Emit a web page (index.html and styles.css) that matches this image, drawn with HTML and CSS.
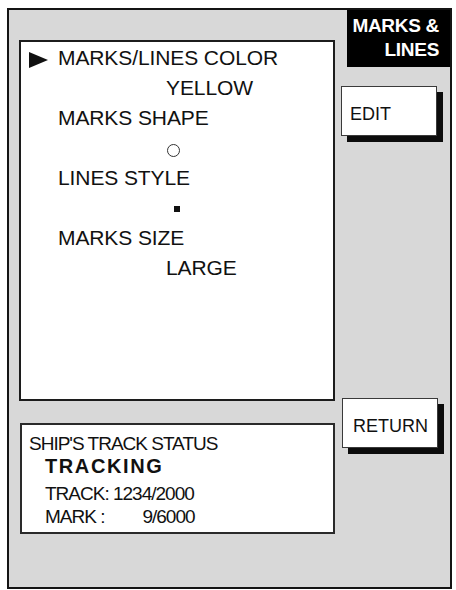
FILE: index.html
```html
<!DOCTYPE html>
<html lang="en">
<head>
  <meta charset="UTF-8">
  <meta name="viewport" content="width=device-width, initial-scale=1.0">
  <title>Marks &amp; Lines</title>
  <link rel="stylesheet" href="styles.css">
</head>
<body>
  <div class="frame">
    <div class="main-col">
      <div class="menu-panel">
        <div class="row label"><span class="cursor"></span>MARKS/LINES COLOR</div>
        <div class="row value">YELLOW</div>
        <div class="row label">MARKS SHAPE</div>
        <div class="row value"><span class="mark-circle"></span></div>
        <div class="row label">LINES STYLE</div>
        <div class="row value"><span class="line-dot"></span></div>
        <div class="row label">MARKS SIZE</div>
        <div class="row value">LARGE</div>
      </div>

      <div class="status-panel">
        <div class="status-line">SHIP'S TRACK STATUS</div>
        <div class="status-line state">TRACKING</div>
        <div class="status-line sub gap">TRACK: 1234/2000</div>
        <div class="status-line sub">MARK :<span class="mark-count">9/6000</span></div>
      </div>
    </div>

    <div class="side-col">
      <div class="title">MARKS &amp;<br>LINES</div>
      <div class="soft-key edit">EDIT</div>
      <div class="soft-key return">RETURN</div>
    </div>
  </div>
</body>
</html>
```

FILE: styles.css
```css
* {
  margin: 0;
  padding: 0;
  box-sizing: border-box;
}

body {
  font-family: 'Liberation Sans', Arial, sans-serif;
  background: #ffffff;
  color: #111111;
}

.frame {
  display: flex;
  width: 445px;
  height: 581px;
  margin: 8px 0 0 7px;
  border: 2px solid #141414;
  background: #d8d8d8;
}

.main-col {
  width: 328px;
  padding: 30px 0 0 10px;
}

.menu-panel {
  width: 316px;
  height: 361px;
  border: 2px solid #1c1c1c;
  background: #ffffff;
  padding-top: 1px;
}

.row {
  display: flex;
  align-items: center;
  height: 30px;
  line-height: 30px;
  font-size: 21px;
  letter-spacing: -0.1px;
  white-space: nowrap;
}

.label {
  position: relative;
  padding-left: 37px;
}

.value {
  padding-left: 145px;
}

.cursor {
  position: absolute;
  left: 8px;
  top: 9px;
  width: 0;
  height: 0;
  border-top: 8px solid transparent;
  border-bottom: 8px solid transparent;
  border-left: 19px solid #111111;
}

.mark-circle {
  display: block;
  width: 13px;
  height: 13px;
  margin: 4px 0 0 1px;
  border: 1.5px solid #333333;
  border-radius: 50%;
}

.line-dot {
  display: block;
  width: 6px;
  height: 6px;
  margin: 2px 0 0 8px;
  background: #111111;
}

.status-panel {
  width: 315px;
  height: 111px;
  margin: 22px 0 0 1px;
  border: 2px solid #2a2a2a;
  background: #ffffff;
  padding: 7px 0 0 7px;
}

.status-line {
  font-size: 19px;
  line-height: 23px;
  letter-spacing: -1px;
  white-space: nowrap;
}

.state {
  padding-left: 16px;
  font-size: 20px;
  font-weight: 700;
  letter-spacing: 1.6px;
}

.sub {
  padding-left: 16px;
}

.gap {
  margin-top: 4px;
}

.mark-count {
  margin-left: 38px;
}

.side-col {
  display: flex;
  flex-direction: column;
  width: 113px;
}

.title {
  height: 57px;
  margin-left: 10px;
  padding: 4px 11px 0 0;
  background: #000000;
  color: #ffffff;
  font-size: 19px;
  font-weight: 700;
  line-height: 24px;
  letter-spacing: -0.3px;
  text-align: right;
}

.soft-key {
  width: 96px;
  height: 50px;
  margin-left: 4px;
  padding: 17px 0 0 8px;
  border: 1px solid #3a3a3a;
  background: #ffffff;
  box-shadow: 6px 6px 0 #0c0c0c;
  font-size: 18px;
  line-height: 21px;
}

.edit {
  margin-top: 19px;
}

.return {
  margin: 262px 0 0 5px;
  padding-left: 10px;
}
```
